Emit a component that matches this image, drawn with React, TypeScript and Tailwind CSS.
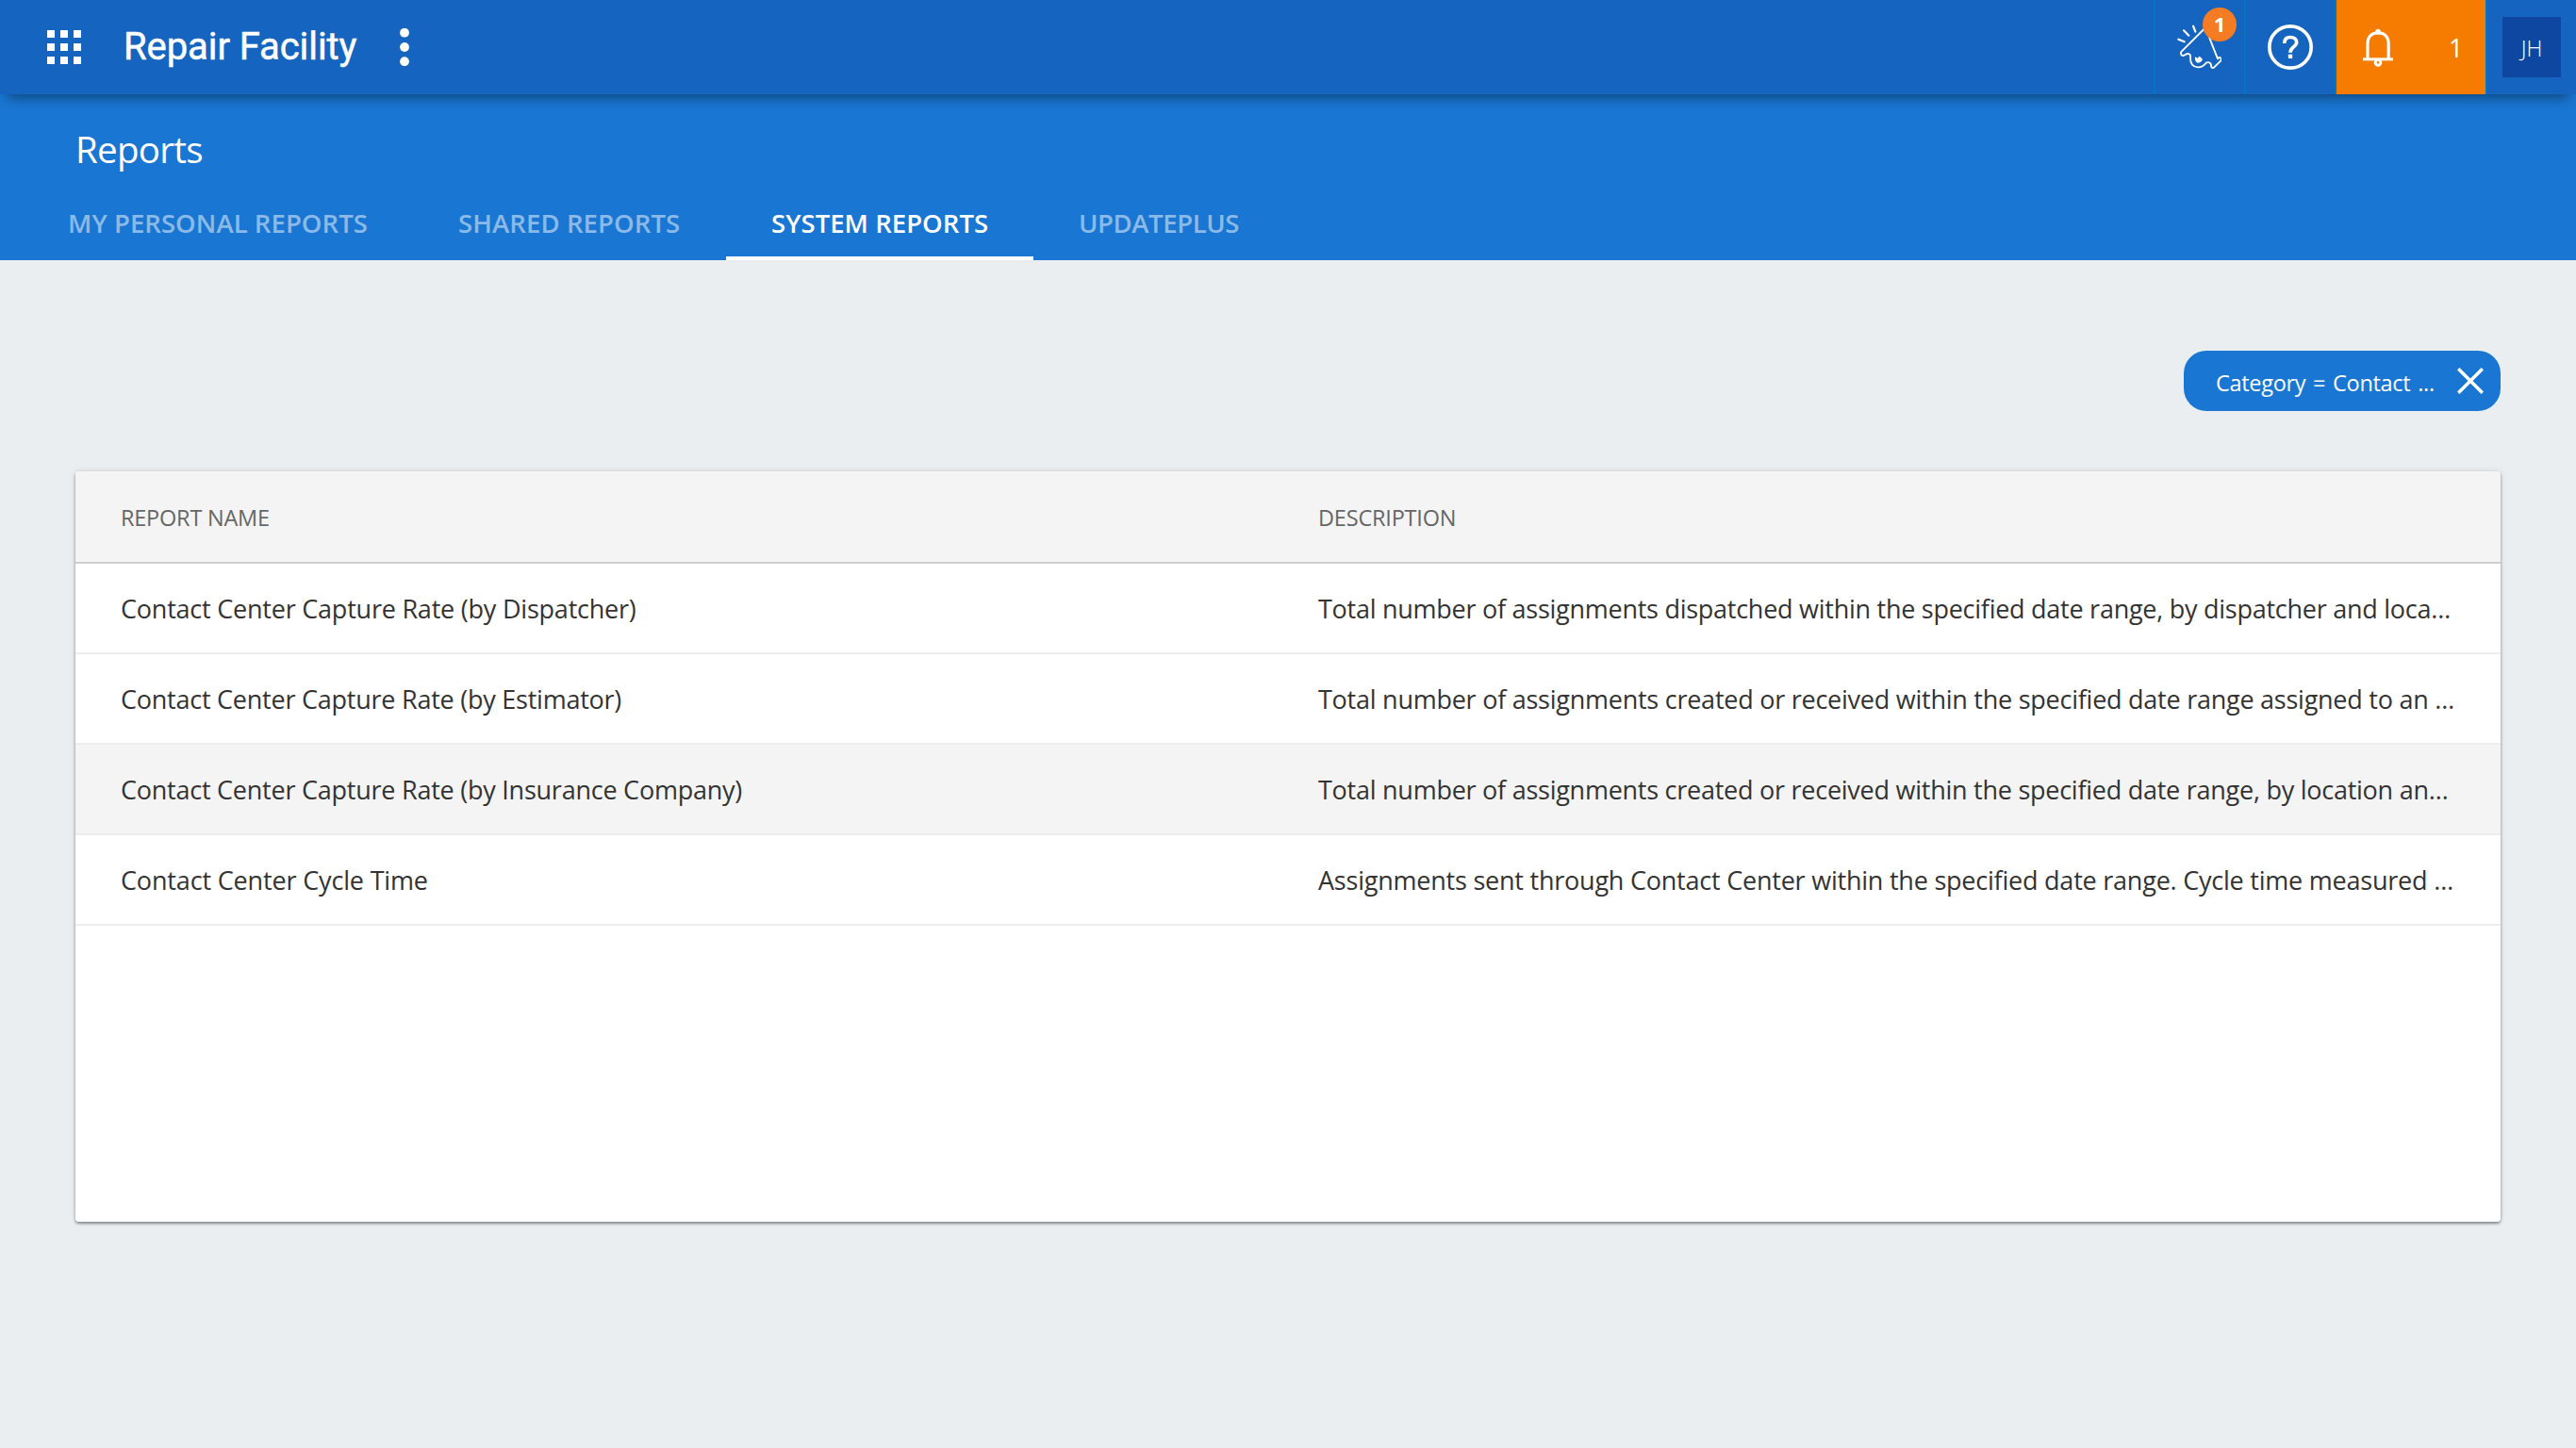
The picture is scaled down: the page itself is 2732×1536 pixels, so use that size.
type Tab = { label: string; box: string; active?: boolean };

const tabs: Tab[] = [
  { label: "MY PERSONAL REPORTS", box: "w-[414px] tracking-[0.06px]" },
  { label: "SHARED REPORTS", box: "w-[332px] tracking-[0.1px]" },
  { label: "SYSTEM REPORTS", box: "w-[326px] tracking-[0.04px]", active: true },
  { label: "UPDATEPLUS", box: "w-[266px] tracking-[-0.4px]" },
];

type Report = {
  name: string;
  nameTracking: string;
  description: string;
  descriptionTracking: string;
  hovered?: boolean;
};

const reports: Report[] = [
  {
    name: "Contact Center Capture Rate (by Dispatcher)",
    nameTracking: "tracking-[-0.22px]",
    description:
      "Total number of assignments dispatched within the specified date range, by dispatcher and loca…",
    descriptionTracking: "tracking-[-0.262px]",
  },
  {
    name: "Contact Center Capture Rate (by Estimator)",
    nameTracking: "tracking-[-0.24px]",
    description:
      "Total number of assignments created or received within the specified date range assigned to an …",
    descriptionTracking: "tracking-[-0.25px]",
  },
  {
    name: "Contact Center Capture Rate (by Insurance Company)",
    nameTracking: "tracking-[-0.24px]",
    description:
      "Total number of assignments created or received within the specified date range, by location an…",
    descriptionTracking: "tracking-[-0.255px]",
    hovered: true,
  },
  {
    name: "Contact Center Cycle Time",
    nameTracking: "tracking-[-0.16px]",
    description:
      "Assignments sent through Contact Center within the specified date range. Cycle time measured …",
    descriptionTracking: "tracking-[-0.223px]",
  },
];

function GridIcon() {
  return (
    <svg className="size-9 fill-white" viewBox="0 0 36 36">
      {[0, 14, 28].map((y) =>
        [0, 14, 28].map((x) => <rect key={`${x}-${y}`} x={x} y={y} width="8" height="8" />),
      )}
    </svg>
  );
}

function MoreIcon() {
  return (
    <svg className="h-10 w-2.5 fill-white" viewBox="0 0 10 40">
      <circle cx="5" cy="4.7" r="4.9" />
      <circle cx="5" cy="20" r="4.9" />
      <circle cx="5" cy="35.2" r="4.9" />
    </svg>
  );
}

function MegaphoneIcon() {
  return (
    <svg
      className="h-[52px] w-12"
      viewBox="24 72 144 156"
      fill="none"
      stroke="white"
      strokeWidth="5.500"
      strokeLinecap="round"
      strokeLinejoin="round"
    >
      <path d="M112 93 L41 164 C36 170 40 178 47 177 C53 176 54 171 61 171 C68 171 70 176 69 184 C69 204 79 214 93 214 C106 214 114 207 119 200 C126 196 134 199 135 206 C134 213 138 218 144 215 L166 193 C169 187 165 182 160 183 L156 187 L128 116" />
      <path d="M31 125 L50 133 M48 97 L64 113 M78 83 L85 101" strokeWidth="6.500" />
      <path d="M84 181 L92 185 L97 179 Q108 184 107 192 Q101 201 92 200 Q82 196 84 181 Z" fill="white" stroke="none" />
    </svg>
  );
}

function HelpIcon() {
  return (
    <svg className="size-12" viewBox="405 78 144 144" fill="none" stroke="white">
      <circle cx="477" cy="150" r="66.5" strokeWidth="11" />
      <path d="M458 138 C458 124 465 118.500 477 118.500 S497 125 497 135 C497 149 477 149 477 167" strokeWidth="11" />
      <rect x="470.500" y="173" width="13" height="13" fill="white" stroke="none" />
    </svg>
  );
}

function BellIcon() {
  return (
    <svg className="h-[41px] w-8" viewBox="138 88 96 123" fill="none" stroke="white">
      <path d="M153 184 V137 C153 114 167 102.500 186 102.500 S219.500 114 219.500 137 V184" strokeWidth="9.500" />
      <circle cx="186" cy="98.500" r="8.500" fill="white" stroke="none" />
      <path d="M138 186.500 H234" strokeWidth="9" />
      <circle cx="186" cy="197" r="8.500" strokeWidth="9" fill="#f57c00" />
    </svg>
  );
}

function TopBar() {
  return (
    <header className="relative z-10 flex h-[100px] items-stretch bg-[#1565c0] shadow-[0_12px_12px_-8px_rgba(0,0,0,0.4)]">
      <div className="flex flex-1 items-center pl-[50px]">
        <GridIcon />
        <h1 className="ml-[45px] w-[248px] whitespace-nowrap pb-px font-['Roboto',sans-serif] text-[40px] font-normal leading-[60px] tracking-[-0.08px] [-webkit-text-stroke:0.5px_white]">
          Repair Facility
        </h1>
        <div className="ml-[45px]">
          <MoreIcon />
        </div>
      </div>
      <div className="relative w-24 border-l-2 border-[#0277bd] pl-[22px] pt-6">
        <MegaphoneIcon />
        <span className="absolute left-[50px] top-2 flex size-9 items-center justify-center rounded-full bg-[#f57c22] pb-[3px] text-[22px] font-bold leading-none">
          1
        </span>
      </div>
      <div className="flex w-24 items-center border-l-2 border-[#0277bd] pl-[23px]">
        <HelpIcon />
      </div>
      <div className="flex w-[162px] items-center border-x-2 border-[#0277bd] bg-[#f57c00] bg-clip-padding pl-7">
        <BellIcon />
        <span className="ml-[59px] pt-0.5 text-[27px] font-[370] leading-10">1</span>
      </div>
      <div className="flex w-[94px] items-center pl-4">
        <div className="flex h-16 w-[62px] items-center justify-center bg-[#0d47a1] pt-[3px] text-[23.5px] font-[350] leading-none">
          JH
        </div>
      </div>
    </header>
  );
}

function SubHeader() {
  return (
    <section className="flex h-[176px] flex-col bg-[#1976d2]">
      <h2 className="mt-8 pl-20 text-[38.5px] font-[380] leading-[52px] tracking-[-0.7px]">Reports</h2>
      <nav className="ml-6 mt-3 flex h-20">
        {tabs.map((tab) => (
          <div
            key={tab.label}
            className={`${tab.box} ${
              tab.active ? "border-white text-white" : "border-transparent text-white/50"
            } flex items-center whitespace-nowrap border-b-4 pl-12 pt-1.5 text-[27.5px] font-[550] leading-10`}
          >
            {tab.label}
          </div>
        ))}
      </nav>
    </section>
  );
}

function FilterChip() {
  return (
    <div className="flex h-16 w-[336px] items-center rounded-[24px] bg-[#1976d2] pl-[34px] text-white">
      <span className="w-64 whitespace-nowrap pt-[3px] text-[23.5px] leading-8 tracking-[-0.3px] [word-spacing:2px]">
        Category = Contact ...
      </span>
      <svg className="size-7" viewBox="0 0 28 28" stroke="white" strokeWidth="3.500">
        <path d="M1.200 1.200 L26.800 26.800 M26.800 1.200 L1.200 26.800" />
      </svg>
    </div>
  );
}

function ReportTable() {
  return (
    <div className="h-[796px] overflow-hidden rounded bg-white">
      <div className="flex h-[98px] items-center border-b-2 border-[#cfcfcf] bg-[#f4f4f4] pl-12 pt-1 text-[23.5px] text-[#666]">
        <div className="w-[1270px] tracking-[-0.22px]">REPORT NAME</div>
        <div className="tracking-[-0.2px]">DESCRIPTION</div>
      </div>
      {reports.map((r) => (
        <div
          key={r.name}
          className={`${r.hovered ? "bg-[#f4f4f4]" : "bg-white"} flex h-24 items-center whitespace-nowrap border-b-2 border-[#ededed] pl-12 pt-0.5 text-[27px] leading-10 text-[#333]`}
        >
          <div className={`${r.nameTracking} w-[1270px]`}>{r.name}</div>
          <div className={r.descriptionTracking}>{r.description}</div>
        </div>
      ))}
    </div>
  );
}

export default function App() {
  return (
    <div className="h-[1536px] w-[2732px] overflow-hidden bg-[#eaeef1] font-['Open_Sans','Noto_Sans',sans-serif] text-white">
      <TopBar />
      <SubHeader />
      <main className="px-20 pt-24">
        <div className="flex justify-end">
          <FilterChip />
        </div>
        <div className="mt-16 rounded shadow-[0_2px_3px_rgba(0,0,0,0.4),0_0_6px_rgba(0,0,0,0.12)]">
          <ReportTable />
        </div>
      </main>
    </div>
  );
}
